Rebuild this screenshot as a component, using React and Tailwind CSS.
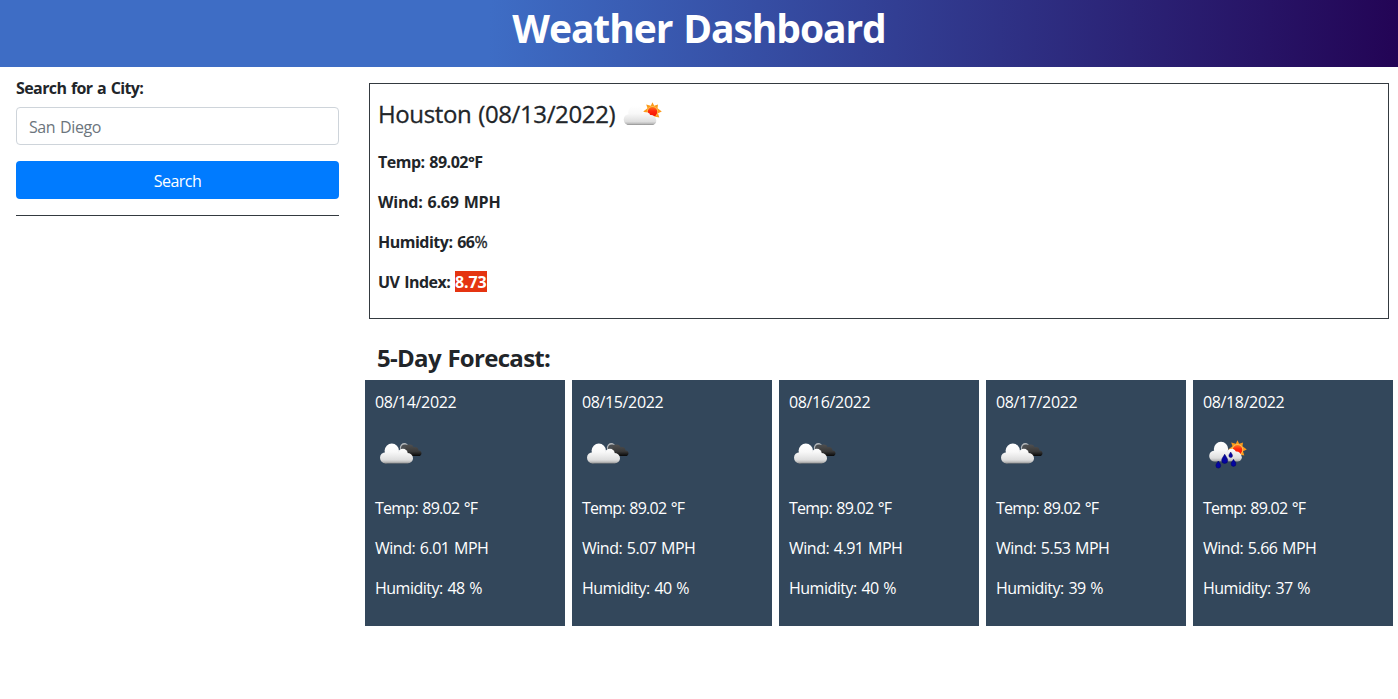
const DAYS = [
  { date: '08/14/2022', icon: 'clouds', wind: '6.01', humidity: 48 },
  { date: '08/15/2022', icon: 'clouds', wind: '5.07', humidity: 40 },
  { date: '08/16/2022', icon: 'clouds', wind: '4.91', humidity: 40 },
  { date: '08/17/2022', icon: 'clouds', wind: '5.53', humidity: 39 },
  { date: '08/18/2022', icon: 'rain', wind: '5.66', humidity: 37 },
];

function Defs({ id }) {
  return (
    <defs>
      <linearGradient id={`${id}-cloud`} gradientUnits="userSpaceOnUse" x1="0" y1="14" x2="0" y2="33.500">
        <stop offset="0" stopColor="#ffffff" />
        <stop offset="0.4" stopColor="#f8f8f8" />
        <stop offset="0.8" stopColor="#dedede" />
        <stop offset="0.92" stopColor="#b8b8b8" />
        <stop offset="1" stopColor="#757575" />
      </linearGradient>
      <linearGradient id={`${id}-dark`} gradientUnits="userSpaceOnUse" x1="0" y1="13" x2="0" y2="26">
        <stop offset="0" stopColor="#555555" />
        <stop offset="0.65" stopColor="#383838" />
        <stop offset="1" stopColor="#080808" />
      </linearGradient>
      <linearGradient id={`${id}-sun`} x1="0" y1="0" x2="0" y2="1">
        <stop offset="0" stopColor="#ff7a20" />
        <stop offset="0.4" stopColor="#ff2a10" />
        <stop offset="1" stopColor="#f51400" />
      </linearGradient>
    </defs>
  );
}

function Sun({ id }) {
  return (
    <g transform="translate(34.500 19.800)">
      <path
        d="M0-9.500 1.700-6 5.500-7.300 5-3.500 9.300-.3 5.500 1.500 6.800 5.800 3 5 0 9-3 5-6.800 5.800-5.500 1.500-9.300-.3-5-3.500-6.300-7.300-1.700-6z"
        fill="#fb9a1c"
      />
      <circle r="5.700" fill="#ffc14d" />
      <circle r="4.800" fill={`url(#${id}-sun)`} />
    </g>
  );
}

function WhiteCloud({ id, low = false }) {
  return (
    <g fill={`url(#${id}-cloud)`}>
      <circle cx="17.500" cy="20.500" r="7.200" />
      <circle cx="11.300" cy="27.500" r="5.600" />
      {low ? <circle cx="28" cy="24.800" r="4.600" /> : <circle cx="28.500" cy="23.500" r="5" />}
      {low ? <circle cx="34" cy="28.800" r="4.300" /> : <circle cx="33.700" cy="28" r="5" />}
      <rect x="7" y="23" width="30.500" height="10.100" rx="4.500" />
    </g>
  );
}

function PartlyCloudy() {
  return (
    <svg viewBox="0 0 50 50" className="ml-[3px] size-[50px] shrink-0">
      <Defs id="part" />
      <Sun id="part" />
      <WhiteCloud id="part" low />
    </svg>
  );
}

function Clouds({ id }) {
  return (
    <svg viewBox="0 0 50 50" className="size-[50px]">
      <Defs id={id} />
      <circle cx="29.300" cy="17.500" r="4.400" fill="#b4b8bb" />
      <circle cx="30" cy="18.500" r="4" fill="#4a4d50" />
      <g fill={`url(#${id}-dark)`}>
        <circle cx="34.500" cy="18.500" r="4.100" />
        <circle cx="39.800" cy="20.600" r="3.600" />
        <circle cx="43.600" cy="23.200" r="2.800" />
        <path d="M27 19h12l5.600 7H29z" />
      </g>
      <g transform="translate(-.7 .3)">
        <WhiteCloud id={id} />
      </g>
    </svg>
  );
}

function Rain() {
  return (
    <svg viewBox="0 0 50 50" className="size-[50px]">
      <Defs id="rain" />
      <Sun id="rain" />
      <g transform="translate(.5 -1.500)">
        <WhiteCloud id="rain" low />
      </g>
      <g fill="#0505a0" stroke="#000066" strokeWidth=".5">
        <path d="M15.300 31c1.200 2.200 2.400 3 2.400 4.700a2.400 2.400 0 0 1-4.800 0c0-1.700 1.200-2.500 2.400-4.700z" />
        <path d="M21.700 24.200c1.400 2.800 3 4 3 6.200a3 3 0 0 1-6 0c0-2.200 1.600-3.400 3-6.200z" />
        <path d="M27.700 22c.9 1.700 1.800 2.500 1.800 3.800a1.800 1.800 0 0 1-3.600 0c0-1.300.9-2.100 1.800-3.800z" />
        <path d="M30.500 29.300c1.200 2.200 2.400 3 2.400 4.700a2.400 2.400 0 0 1-4.800 0c0-1.700 1.200-2.500 2.400-4.700z" />
      </g>
    </svg>
  );
}

function SearchPanel() {
  return (
    <form className="flex w-[355px] shrink-0 flex-col px-4 pt-[9px]">
      <label htmlFor="city" className="mb-[7px] text-base font-bold tracking-[-0.6px] [word-spacing:1px]">
        Search for a City:
      </label>
      <input
        id="city"
        placeholder="San Diego"
        className="mb-4 h-[38px] rounded border border-[#ced4da] px-3 pt-0.5 tracking-[-0.4px] [word-spacing:1px] placeholder:text-[#6c757d]"
      />
      <button type="button" className="h-[38px] rounded bg-[#007bff] pt-px tracking-[-0.5px] text-white">
        Search
      </button>
      <hr className="mt-4 border-[#343a40]" />
    </form>
  );
}

function CurrentWeather() {
  return (
    <section className="mr-[9px] ml-3.5 h-[236px] border border-[#343a40] px-2 pt-2">
      <h2 className="flex h-[50px] items-center text-2xl font-medium">
        <span className="-mt-1.5 tracking-[-0.38px] [-webkit-text-stroke:0.3px_#212529] [word-spacing:1px]">
          Houston (08/13/2022)
        </span>
        <PartlyCloudy />
      </h2>
      <div className="mt-2 flex flex-col gap-4 font-bold tracking-[-0.5px] [word-spacing:1px]">
        <p>Temp: 89.02°F</p>
        <p className="tracking-[-0.2px]">Wind: 6.69 MPH</p>
        <p>
          Humidity: 66<span className="font-medium [-webkit-text-stroke:0.3px_#212529]">%</span>
        </p>
        <p>
          UV Index: <span className="inline-block h-[21px] bg-[#e53411] leading-[23px] tracking-[-0.1px] text-white">8.73</span>
        </p>
      </div>
    </section>
  );
}

function DayCard({ day, index }) {
  return (
    <article className="flex h-[246px] w-[200px] flex-col bg-[#33475b] px-2.5 pt-2.5 tracking-[-0.5px] text-white">
      <p className="tracking-[-0.37px]">{day.date}</p>
      <div className="mt-4 mb-4 h-[50px]">
        {day.icon === 'rain' ? <Rain /> : <Clouds id={`clouds-${index}`} />}
      </div>
      <div className="flex flex-col gap-4 [word-spacing:1px]">
        <p className="tracking-[-0.75px]">Temp: 89.02 °F</p>
        <p>Wind: {day.wind} MPH</p>
        <p>Humidity: {day.humidity} %</p>
      </div>
    </article>
  );
}

export default function App() {
  return (
    <div className="h-[699px] overflow-hidden bg-white font-['Open_Sans','Noto_Sans',sans-serif] text-base text-[#212529]">
      <header className="h-[67px] bg-[linear-gradient(92deg,#3e6dc5_35%,#230455_100%)] text-center">
        <h1 className="pt-1 text-[39px] leading-[48px] font-bold tracking-[-1.1px] text-white [word-spacing:2px]">
          Weather Dashboard
        </h1>
      </header>
      <div className="flex">
        <SearchPanel />
        <main className="flex-1 pt-4">
          <CurrentWeather />
          <h2 className="mt-6 mb-2 ml-[22px] text-2xl leading-[29px] font-bold tracking-[-0.7px] [word-spacing:1px]">
            5-Day Forecast:
          </h2>
          <div className="ml-2.5 flex gap-[7px]">
            {DAYS.map((day, i) => (
              <DayCard key={day.date} day={day} index={i} />
            ))}
          </div>
        </main>
      </div>
    </div>
  );
}
